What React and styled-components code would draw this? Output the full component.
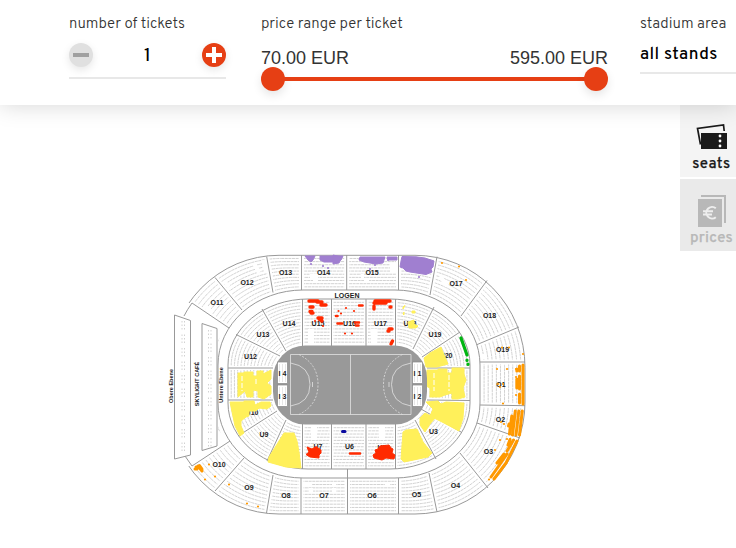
import React from "react";
import styled, { createGlobalStyle } from "styled-components";

const GlobalStyle = createGlobalStyle`
  * { box-sizing: border-box; }
  body { margin: 0; background: #fff; overflow: hidden; font-family: Overpass, Roboto, sans-serif; }
`;

const Page = styled.div`
  width: 736px;
  height: 548px;
  overflow: hidden;
  display: flex;
  flex-direction: column;
  background: #fff;
`;

const FilterBar = styled.header`
  position: relative;
  z-index: 1;
  flex: none;
  height: 105px;
  padding: 14px 0 0 69px;
  display: grid;
  grid-template-columns: 160px 347px 128px;
  column-gap: 32px;
  background: #fff;
  box-shadow: 0 0 22px rgba(0, 0, 0, 0.17);
`;

const Field = styled.div`
  display: flex;
  flex-direction: column;
  width: ${(p) => p.$width}px;
`;

const Label = styled.div`
  height: 18px;
  padding-top: 2px;
  font-size: 15px;
  line-height: 18px;
  font-weight: 300;
  letter-spacing: ${(p) => p.$spacing}px;
  color: #333;
  white-space: nowrap;
`;

const Stepper = styled.div`
  display: flex;
  justify-content: space-between;
  align-items: flex-start;
  height: 47px;
  padding-top: 11px;
  border-bottom: 2px solid #e8e8e8;
`;

const RoundButton = styled.button`
  width: 24px;
  height: 24px;
  padding: 0;
  border: 0;
  border-radius: 50%;
  display: grid;
  place-items: center;
  background: ${(p) => (p.$active ? "#e63f14" : "#e0e0e0")};
  color: ${(p) => (p.$active ? "#fff" : "#a0a0a0")};
  box-shadow: 0 3px 9px rgba(0, 0, 0, 0.1);
`;

const Count = styled.span`
  padding-top: 2px;
  font-size: 18px;
  line-height: 24px;
  font-weight: 500;
  color: #000;
`;

const PriceRow = styled.div`
  display: flex;
  justify-content: space-between;
  height: 35px;
  padding-top: 15px;
  font: 18px/22px "Liberation Sans", Arial, sans-serif;
  color: #333;
`;

const Slider = styled.div`
  display: flex;
  align-items: center;
  height: 24px;
`;

const Knob = styled.span`
  flex: none;
  width: 24px;
  height: 24px;
  border-radius: 50%;
  background: #e63f14;
  box-shadow: 0 4px 10px rgba(0, 0, 0, 0.1);
`;

const Track = styled.span`
  flex: 1;
  height: 4px;
  margin: 0 -2px;
  background: #e63f14;
`;

const Select = styled.div`
  height: 42px;
  padding-top: 11px;
  border-bottom: 2px solid #e8e8e8;
  font-size: 17px;
  line-height: 24px;
  font-weight: 500;
  letter-spacing: 0.4px;
  color: #000;
`;

const Main = styled.main`
  flex: 1;
  display: flex;
  justify-content: space-between;
`;

const MapFrame = styled.div`
  padding: 145px 0 0 160px;
  svg { display: block; }
`;

const Tabs = styled.nav`
  width: 56px;
  display: flex;
  flex-direction: column;
  gap: 2px;
`;

const Tab = styled.button`
  width: 63px;
  height: 72px;
  padding: ${(p) => (p.$active ? "18px" : "14px")} 0 0;
  border: 0;
  display: flex;
  flex-direction: column;
  align-items: center;
  background: ${(p) => (p.$active ? "#f4f4f4" : "#eaeaea")};
  color: ${(p) => (p.$active ? "#1a1a1a" : "#b8b8b8")};
  svg { display: block; flex: none; }
`;

const TabLabel = styled.span`
  font: 500 15px/20px Overpass, Roboto, sans-serif;
  letter-spacing: ${(p) => p.$spacing}px;
  margin-top: ${(p) => p.$top}px;
  -webkit-text-stroke: 0.25px currentColor;
`;

const MapLabel = styled.text`
  font: bold 7px "Liberation Sans", Arial, sans-serif;
  text-anchor: middle;
  fill: #222;
`;

const SideLabel = styled(MapLabel)`
  font-size: 5.5px;
`;

const mix = (a, b, t) => a + (b - a) * t;

/* [x, y, width, height, rx, ry] */
const OUTER = [169, 255.3, 356, 258.7, 110, 112];
const MIDDLE = [218, 290, 262, 188, 85, 75];
const INNER = [228, 299, 242, 170, 80, 66];
const PITCH = [273, 345.5, 154, 79, 32, 33];

function Ring({ shape, ...rest }) {
  const [x, y, width, height, rx, ry] = shape;
  return <rect x={x} y={y} width={width} height={height} rx={rx} ry={ry} {...rest} />;
}

function SeatRows({ from, to, rows, dash }) {
  return Array.from({ length: rows }, (_, i) => (
    <Ring
      key={i}
      shape={from.map((v, k) => mix(v, to[k], (i + 1) / (rows + 1)))}
      fill="none"
      stroke="#d2d2d2"
      strokeWidth="1"
      strokeDasharray={dash}
    />
  ));
}

const OUTER_LINES =
  "M266.7 256.7L273 292.5M215 277.5L242 310M192 303L229 328M301.5 255V290M346.7 255V290M398.5 255V290M437 256.7L430 295M487 280.5L461 316M519 327L476 345M525 362H480M480 405L525 405.7M477 423L520 438M460 453L488 488M429 473L437 512M398.5 478V514M347.5 469V514M301 478V514M273 475L266.5 513M244 458L215 491M230 441L192 466";
const INNER_LINES =
  "M228 368H273M236 334.5L280 356M262 309L286 351M302.5 299V346M331.5 299V346M366 299V346M395.5 299V346M434 307L413 349M460 332L422 357M427 368H470M427 400L470 400.5M461 432L421 409M436 459L415 420M395.5 424V469M366 424V469M331.5 424V469M302.5 424V469M267 461L286 420M238 436L277 411M228 400H273";

const LABELS = [
  ["O11", 217, 302.5], ["O12", 247, 282], ["O13", 285.5, 272], ["O14", 323.5, 272], ["O15", 372, 272],
  ["O17", 456, 283.5], ["O18", 489.5, 315.5], ["O19", 502.5, 349.5], ["O1", 501, 384], ["O2", 500.5, 419],
  ["O3", 488.5, 451.5], ["O4", 455.5, 485], ["O5", 416.5, 494.5], ["O6", 372, 495.5], ["O7", 324, 495.5],
  ["O8", 286, 495.5], ["O9", 249, 487.5], ["O10", 219, 464.5],
  ["U12", 250.5, 356], ["U13", 263, 334.5], ["U14", 289, 323.5], ["U15", 318, 323], ["U16", 349.5, 323],
  ["U17", 380.5, 323], ["U18", 410, 323.5], ["U19", 435, 334.5], ["U20", 446, 355.5], ["U1", 445, 383],
  ["U3", 433.5, 431.5], ["U5", 382, 447], ["U6", 349.5, 446.5], ["U7", 318, 446.5], ["U9", 264, 434.5],
  ["U10", 252, 412], ["U11", 251, 383],
];

const BOXES = [["I 4", 277.5, 362], ["I 3", 277.5, 385], ["I 1", 412.5, 362], ["I 2", 412.5, 385]];

const DOTS = {
  "#ff9900": [
    [442, 263], [459, 266.5], [466, 280], [502, 347.5], [509, 347.5], [523, 354], [497, 369], [507, 369],
    [516, 369], [516, 377], [516, 395], [498, 384], [500, 387], [503, 403.5], [503, 384],
    [501, 422], [504, 424], [495, 450], [500, 440], [507, 439], [489, 479.5], [209, 464.5], [215, 476.5],
    [205, 479.5], [229, 484.5], [247, 503.5], [258, 506.5],
  ],
  "#a07fd0": [[311, 264], [323, 266], [328, 268], [370, 269], [375, 265], [388, 260], [419, 277]],
  "#ff2a00": [
    [338.5, 311], [346, 308], [354, 311], [341, 313.5], [345, 333.5], [352, 333.5], [323, 326], [315, 321],
  ],
};

const RUNS = [
  ["#ff2a00", 3.4, "M309 301H318M310 307H313M310 311.5H312M311 313H313M317 302H322M321 305H326M318 318H322M319 319L322 321M375 301H390M374 303H386M374 306V309M390 307H391M389 329H392M389 331H388M392.5 341L391 344"],
  ["#ff2a00", 2.6, "M359 305.5H362.5M336 316H337.5M337.5 323.5H342M355 322.5H359M356 325.5H358.5M350 453.5H360"],
  ["#0a0aa0", 3, "M342.5 431.5H345"],
  ["#00b512", 3.2, "M461 338L467 355M467 360V360.5M468 364V364.5"],
  ["#ff9900", 3, "M523 365V404M519.5 366V371M519.5 376V389M519.5 394V403M516.8 369V371M516.8 379V388M522.3 411L519.5 435M518.8 411L516 435M515.3 411L512.5 435M511.8 416L509.5 434M509 424L508.5 426M517 441L506 463L494 479M513.5 440L507 451M510 439.5L508 445M507 454L491 477M504 454L497 463"],
  ["#ff9900", 3, "M196 467H197M195 469H197M198 466L202 471M199.5 465.5L202 469"],
];

const BLOCKS = [
  ["#a07fd0", "M305 256H315L313 260L311 262L308 260ZM320 256H343L341 260L337 262H324L320 260ZM333 255L342 257L339 263L333 264ZM360 257H385L383 263L376 264L364 262L359 260ZM387 257H397V260H388Z"],
  ["#a07fd0", "M402 256.5L416 256.8L425 258L434 261L433 267L431 269L432 272L426 274.5L410 272L406 271L403 268L400 267L401 261Z"],
  ["#fff05a", "M238 373H244V372H253V376H257V371H263V374L271 370V379L267 383L271 386V394L264 399L258 397V391L253 390V397H247L245 391L238 397Z"],
  ["#fff05a", "M230 402H244V401H254L255 405L261 402H270L271 406L267 409L259 408L256 411L249 411V416L246 417L241 421L241 426L244 433L240 436L235 426Z"],
  ["#fff05a", "M284 433H294L297 441L299 452L301 468L286 467L268 462L269 457Z"],
  ["#fff05a", "M424 358L430 353L441 347L442 350L448 364L437 367H426Z"],
  ["#fff05a", "M427 370H438V369H447V373H452V368H464V374L466 380L463 388L465 397L458 399H452V393L445 395L440 397H430V388L426 386Z"],
  ["#fff05a", "M426 402L438 401L441 404L446 402L464 403L463 418L459 431L442 422L430 416L433 409Z"],
  ["#fff05a", "M420 418L425 413L435 418L430 424L425 432L420 425Z"],
  ["#fff05a", "M403 432L406 430L417 429L423 442L432 453L428 457L404 462L401 459Z"],
  ["#fff05a", "M408 322L414 320V324L418 326L416 328L409 328ZM403 307L405 305.5L403 309ZM403 314L404 312V315ZM412 311H415V313H412Z"],
  ["#ff2a00", "M307 447L312 449L316 446.5L321 450L321 453L319 455L319 458L310 457L306 454.5L309 452Z"],
  ["#ff2a00", "M375 450L378 449L380 446L389 445L391 448L393 449L392 453L395 455L394 459L386 458L382 460L374 458L373 455L376 453Z"],
];

function StadiumMap() {
  return (
    <svg width="370" height="270" viewBox="160 250 370 270" fill="none">
      <SeatRows from={OUTER} to={MIDDLE} rows={10} dash="3 .6" />
      <path d={OUTER_LINES} stroke="#fff" strokeWidth="5" />
      <path d="M310 276H318M313 280H318M361 276H364M364 280H369M390 266H397M390 270H397M303 484H312M332 484H336M332 490H336M385 484H390M309 490H313M254 263L259 273M263 260L266 272M440 276L447 286M470 303L480 292M484 354V359M205 306L212 312M224 281L229 287" stroke="#fff" strokeWidth="4" />
      <Ring shape={OUTER} stroke="#999" />
      <path d="M165 303H192L229 328L218 340V430L230 441L192 466H165Z" fill="#fff" />
      <path d="M184 316Q187 310 192 303M185 456L192 466" stroke="#999" />
      <path d={OUTER_LINES} stroke="#999" />
      <Ring shape={MIDDLE} stroke="#999" fill="#fff" />
      <Ring shape={INNER} fill="#fff" />
      <SeatRows from={INNER} to={PITCH} rows={13} dash="3 .6" />
      <path d={INNER_LINES} stroke="#fff" strokeWidth="4" />
      <path d="M311 343V329M374 343V329M314 426V440M382 426V440" stroke="#fff" strokeWidth="6" />
      <Ring shape={INNER} stroke="#999" />
      <path d={INNER_LINES} stroke="#999" />
      <path d="M347.5 469V478" stroke="#999" />

      <path d="M174.5 315L190.5 320.5V455L174.5 459ZM202 323.5L217 328.5V446L202 450.5Z" fill="#fff" stroke="#999" />
      <path d="M182 321V455M184.5 321V455M208.5 330V449M211 330V449" stroke="#d2d2d2" strokeDasharray="1.5 2 1.5 2 1.5 5" />

      {LABELS.map(([name, x, y]) => (
        <MapLabel key={name} x={x} y={y + 2.5}>{name}</MapLabel>
      ))}
      <MapLabel x="347" y="297.8">LOGEN</MapLabel>
      <SideLabel transform="translate(172.5 386) rotate(-90)">Obere Ebene</SideLabel>
      <SideLabel transform="translate(199 384) rotate(-90)">SKYLIGHT CAFÉ</SideLabel>
      <SideLabel transform="translate(223 385) rotate(-90)">Untere Ebene</SideLabel>

      {BLOCKS.map(([fill, d]) => (
        <path key={d} d={d} fill={fill} stroke={fill} strokeWidth="1" strokeLinejoin="round" />
      ))}
      <path d="M242 376V391M256 379V386M434 373V391M449 375V391" stroke="#fff" strokeWidth="1" strokeDasharray="5 2" />
      {RUNS.map(([stroke, w, d]) => (
        <path key={d} d={d} stroke={stroke} strokeWidth={w} strokeLinecap="round" strokeLinejoin="round" />
      ))}
      {Object.entries(DOTS).map(([fill, points]) =>
        points.map(([x, y]) => <circle key={`${x}-${y}`} cx={x} cy={y} r="1.1" fill={fill} />)
      )}

      <Ring shape={PITCH} fill="#999" />
      <g stroke="#e2e2e2" strokeWidth=".8">
        <path d="M290.5 354.5H411V414.5H290.5ZM350.5 354.5V414.5" />
        <path d="M290.5 363Q310 366 310 384.5Q310 403 290.5 406M411 363Q391.5 366 391.5 384.5Q391.5 403 411 406" />
        <path d="M299 354.5Q318 364 318 384.5Q318 405 299 414.5M402.5 354.5Q383.5 364 383.5 384.5Q383.5 405 402.5 414.5" strokeDasharray="2 1.5" />
        <path d="M312.5 382V387M389 382V387" />
      </g>
      {BOXES.map(([name, x, y]) => (
        <g key={name}>
          <rect x={x} y={y} width="10" height="21.5" fill="#fff" stroke="#888" strokeWidth=".7" />
          <path d={`M${x + 2} ${y + 2}v18M${x + 5} ${y + 2}v18M${x + 8} ${y + 2}v18`} stroke="#ddd" strokeWidth=".7" />
          <MapLabel x={x + 5} y={y + 13.5}>{name}</MapLabel>
        </g>
      ))}
    </svg>
  );
}

function TicketsIcon() {
  return (
    <svg width="32" height="28" viewBox="0 0 32 28" fill="none">
      <path d="M4.5 21.5L1.5 5.5L27.5 2L28.2 8" stroke="#1a1a1a" strokeWidth="1.7" />
      <path d="M5 10H31V26H5Z" fill="#1a1a1a" />
      <g fill="#fff">
        <circle cx="24" cy="13" r="1.4" />
        <circle cx="24" cy="18" r="1.4" />
        <circle cx="24" cy="23" r="1.4" />
      </g>
    </svg>
  );
}

function PricesIcon() {
  return (
    <svg width="28" height="34" viewBox="0 0 28 34" fill="none">
      <path d="M3 3H27V30" stroke="#b8b8b8" strokeWidth="2" />
      <path d="M0 6H24V34H0Z" fill="#b8b8b8" />
      <path d="M17.8 15.2A5.8 5.8 0 1 0 17.8 24.2M5 18.2H15M5 21.4H14" stroke="#eee" strokeWidth="2" />
    </svg>
  );
}

export default function App() {
  return (
    <Page>
      <GlobalStyle />
      <FilterBar>
        <Field $width={157}>
          <Label $spacing={0}>number of tickets</Label>
          <Stepper>
            <RoundButton aria-label="Remove ticket">
              <svg width="16" height="16" viewBox="0 0 16 16"><path d="M0 6H16V10H0Z" fill="currentColor" /></svg>
            </RoundButton>
            <Count>1</Count>
            <RoundButton $active aria-label="Add ticket">
              <svg width="16" height="16" viewBox="0 0 16 16"><path d="M6 0H10V6H16V10H10V16H6V10H0V6H6Z" fill="currentColor" /></svg>
            </RoundButton>
          </Stepper>
        </Field>
        <Field $width={347}>
          <Label $spacing={0}>price range per ticket</Label>
          <PriceRow><span>70.00 EUR</span><span>595.00 EUR</span></PriceRow>
          <Slider><Knob /><Track /><Knob /></Slider>
        </Field>
        <Field $width={128}>
          <Label $spacing={0}>stadium area</Label>
          <Select>all stands</Select>
        </Field>
      </FilterBar>
      <Main>
        <MapFrame><StadiumMap /></MapFrame>
        <Tabs>
          <Tab $active><TicketsIcon /><TabLabel $spacing={0.6} $top={4}>seats</TabLabel></Tab>
          <Tab><PricesIcon /><TabLabel $spacing={0.3} $top={2}>prices</TabLabel></Tab>
        </Tabs>
      </Main>
    </Page>
  );
}
